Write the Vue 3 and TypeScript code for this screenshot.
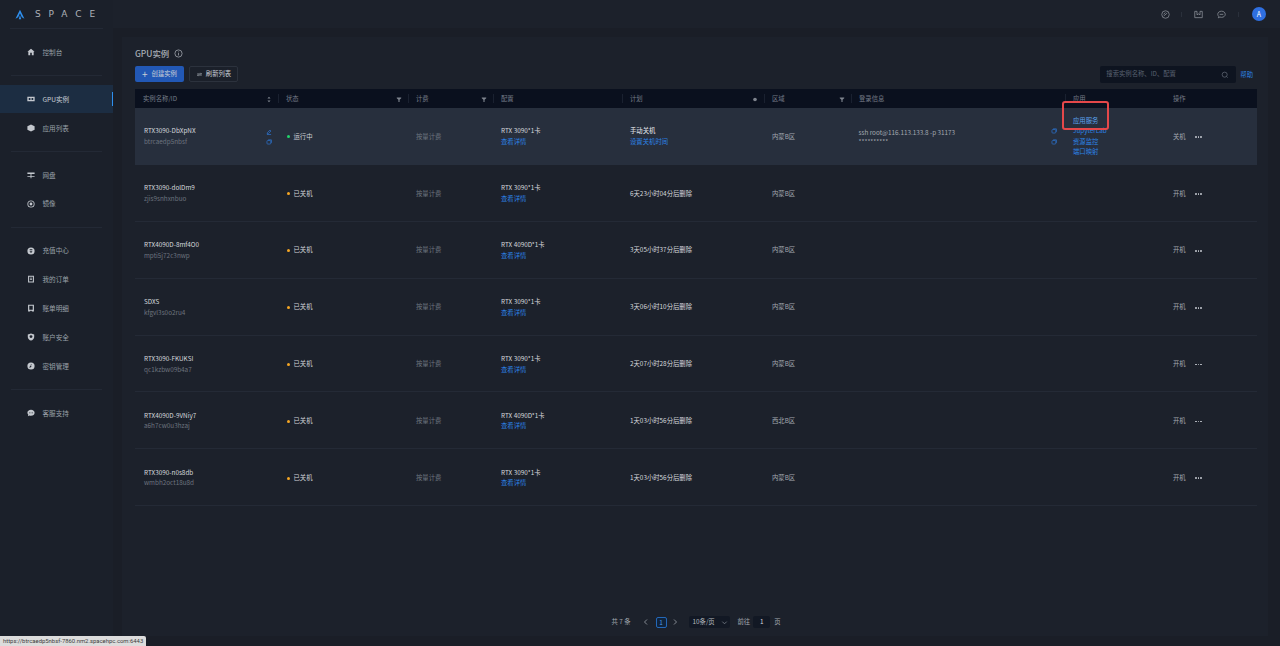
<template>
  <div class="app">
    <aside class="sidebar">
      <div class="logo">
        <svg class="logo-mark" viewBox="0 0 12 12"><path d="M6 0.3 L11.4 11 L8.2 9.4 L6 4.6 L3.8 9.4 L0.6 11 Z" fill="#2e8fee" /><path d="M6 6.6 L7.5 11.8 H4.5 Z" fill="#2e8fee" /></svg>
        <span class="logo-text">SPACE</span>
      </div>
      <div v-for="(group, i) in menu" :key="i" class="menu-group">
        <div v-for="item in group" :key="item.label" class="menu-item" :class="{ active: item.active }">
          <svg class="menu-icon" viewBox="0 0 12 12"><path :d="item.icon" /></svg>
          <span>{{ item.label }}</span>
        </div>
      </div>
    </aside>

    <div class="right">
      <header class="topbar">
        <svg class="top-icon" viewBox="0 0 12 12"><circle cx="6" cy="6" r="5" /><path d="M3.6 8 L8.4 4 M3.4 5.6 L6 3.4" /></svg>
        <i class="top-sep"></i>
        <svg class="top-icon tray" viewBox="0 0 12 12"><path d="M4 1.8 H1 V10.2 H11 V1.8 H8 M4 1.8 V6.4 L6 5.2 L8 6.4 V1.8" /></svg>
        <svg class="top-icon chat" viewBox="0 0 12 12"><path d="M6 1.6 C9 1.6 11 3.4 11 5.7 C11 8 9 9.8 6 9.8 C5.2 9.8 4.5 9.7 3.9 9.4 L1.8 10.4 L2.3 8.4 C1.5 7.7 1 6.8 1 5.7 C1 3.4 3 1.6 6 1.6 Z M3.6 5.8 H8.4" /></svg>
        <i class="top-sep"></i>
        <div class="avatar">A</div>
      </header>

      <main class="content">
        <div class="title-row">
          <h1>GPU实例</h1>
          <svg class="info" viewBox="0 0 12 12"><circle cx="6" cy="6" r="4.8" /><path d="M6 5.4 V8.6 M6 3.4 V4.4" /></svg>
        </div>

        <div class="toolbar">
          <button class="btn primary"><span class="plus">+</span>创建实例</button>
          <button class="btn ghost">
            <svg class="refresh" viewBox="0 0 12 12"><path d="M2 5 H9.5 L7.8 3.2 M10 7 H2.5 L4.2 8.8" /></svg>
            刷新列表
          </button>
          <div class="spacer"></div>
          <div class="search">
            <span>搜索实例名称、ID、配置</span>
            <svg viewBox="0 0 12 12"><circle cx="5.5" cy="5.5" r="3.8" /><path d="M8.3 8.3 L10 10" /></svg>
          </div>
          <a class="help">帮助</a>
        </div>

        <div class="table">
          <div class="thead row-grid">
            <div v-for="h in headers" :key="h.label" class="th">
              <span>{{ h.label }}</span>
              <svg v-if="h.icon === 'sort'" class="th-icon" viewBox="0 0 8 10"><path d="M4 1 L6.2 3.6 H1.8 Z M4 9 L1.8 6.4 H6.2 Z" /></svg>
              <svg v-if="h.icon === 'filter'" class="th-icon" viewBox="0 0 8 10"><path d="M0.8 2 H7.2 V3.2 L4.8 5.2 V8.4 H3.2 V5.2 L0.8 3.2 Z" /></svg>
              <svg v-if="h.icon === 'dot'" class="th-icon" viewBox="0 0 8 10"><circle cx="4" cy="5" r="2.6" /></svg>
            </div>
          </div>

          <div v-for="(r, idx) in rows" :key="r.id" class="tr row-grid" :class="{ selected: idx === 0 }">
            <div class="td name-cell">
              <div>
                <div class="strong">{{ r.name }}</div>
                <div class="muted">{{ r.id }}</div>
              </div>
              <div v-if="idx === 0" class="mini-icons">
                <svg viewBox="0 0 10 10"><path d="M2 8 L2.4 6 L6.6 1.8 L8.2 3.4 L4 7.6 Z M1.5 9.2 H8.5" /></svg>
                <svg viewBox="0 0 10 10"><rect x="1.6" y="2.6" width="6.4" height="5.8" rx="1.4" /><path d="M3.6 1.4 H9 V6.4" /></svg>
              </div>
            </div>
            <div class="td status">
              <i class="dot" :class="r.running ? 'green' : 'orange'"></i>{{ r.running ? '运行中' : '已关机' }}
            </div>
            <div class="td muted">按量计费</div>
            <div class="td">
              <div class="strong">{{ r.config }}</div>
              <a class="link">查看详情</a>
            </div>
            <div class="td">
              <template v-if="r.running">
                <div class="strong bold">手动关机</div>
                <a class="link">设置关机时间</a>
              </template>
              <div v-else class="strong">{{ r.plan }}</div>
            </div>
            <div class="td soft">{{ r.region }}</div>
            <div class="td login-cell">
              <template v-if="r.running">
                <div>
                  <div class="soft">ssh root@116.113.133.8 -p 31173</div>
                  <div class="soft stars">**********</div>
                </div>
                <div class="mini-icons copy">
                  <svg viewBox="0 0 10 10"><rect x="1.6" y="2.6" width="6.4" height="5.8" rx="1.4" /><path d="M3.6 1.4 H9 V6.4" /></svg>
                  <svg viewBox="0 0 10 10"><rect x="1.6" y="2.6" width="6.4" height="5.8" rx="1.4" /><path d="M3.6 1.4 H9 V6.4" /></svg>
                </div>
              </template>
            </div>
            <div class="td app-cell">
              <template v-if="r.running">
                <a class="link light">应用服务</a>
                <a class="link">JupyterLab</a>
                <a class="link">资源监控</a>
                <a class="link">端口映射</a>
              </template>
            </div>
            <div class="td ops">
              <span class="soft">{{ r.running ? '关机' : '开机' }}</span>
              <span class="more"><i></i><i></i><i></i></span>
            </div>
          </div>
          <div class="highlight"></div>
        </div>

        <footer class="pager">
          <span class="soft total">共 7 条</span>
          <svg class="chev prev" viewBox="0 0 8 8"><path d="M5 1.5 L2.5 4 L5 6.5" /></svg>
          <span class="page-num">1</span>
          <svg class="chev next" viewBox="0 0 8 8"><path d="M3 1.5 L5.5 4 L3 6.5" /></svg>
          <span class="size-select">10条/页<svg viewBox="0 0 8 8"><path d="M1.5 3 L4 5.5 L6.5 3" /></svg></span>
          <span class="soft goto">前往</span>
          <span class="page-input">1</span>
          <span class="soft page-unit">页</span>
        </footer>
      </main>
    </div>

    <div class="url-tip">https://btrcaedp5nbsf-7860.nm2.spacehpc.com:6443</div>
  </div>
</template>

<script setup lang="ts">
interface MenuItem {
  label: string
  icon: string
  active?: boolean
}

interface Row {
  name: string
  id: string
  config: string
  plan: string
  region: string
  running?: boolean
}

const menu: MenuItem[][] = [
  [{ label: '控制台', icon: 'M6 1 L11.4 5.8 H10 V11 H2 V5.8 H0.6 Z M4.8 7.2 V11 H7.2 V7.2 Z' }],
  [
    { label: 'GPU实例', active: true, icon: 'M0.5 2.6 H11.5 V9.4 H0.5 Z M2.6 4.6 V7.4 H5.2 V4.6 Z M6.8 4.6 V7.4 H9.4 V4.6 Z' },
    { label: '应用列表', icon: 'M6 0.6 L11.4 3.2 V8.8 L6 11.4 L0.6 8.8 V3.2 Z' },
  ],
  [
    { label: '网盘', icon: 'M0.6 2.2 H11.4 V4.6 H0.6 Z M5.3 4.6 H6.7 V7.8 H11.4 V9 H6.7 V10.8 H5.3 V9 H0.6 V7.8 H5.3 Z' },
    { label: '镜像', icon: 'M6 0.6 A5.4 5.4 0 1 0 6 11.4 A5.4 5.4 0 1 0 6 0.6 Z M6 1.9 A4.1 4.1 0 1 1 6 10.1 A4.1 4.1 0 1 1 6 1.9 Z M6 3.9 A2.1 2.1 0 1 0 6 8.1 A2.1 2.1 0 1 0 6 3.9 Z' },
  ],
  [
    { label: '充值中心', icon: 'M6 0.6 A5.4 5.4 0 1 0 6 11.4 A5.4 5.4 0 1 0 6 0.6 Z M4 3.4 H8 V4.6 H4 Z M4 5.6 H8 V6.8 H6.7 V9 H5.3 V6.8 H4 Z' },
    { label: '我的订单', icon: 'M1.6 1.2 H10.4 V11.2 H1.6 Z M3.2 2.8 V9.6 H8.8 V2.8 Z M4.4 4.2 H7.6 V5.3 H4.4 Z M4.4 6.4 H7.6 V7.5 H4.4 Z' },
    { label: '账单明细', icon: 'M1.6 1 H10.4 V11.2 H7.8 L6 9.8 L4.2 11.2 H1.6 Z M3.4 2.8 V8.6 H8.6 V2.8 Z' },
    { label: '账户安全', icon: 'M6 0.6 L10.8 2.4 V6 C10.8 8.8 8.4 10.8 6 11.4 C3.6 10.8 1.2 8.8 1.2 6 V2.4 Z M6 3.2 A2.2 2.2 0 1 0 6 7.6 A2.2 2.2 0 1 0 6 3.2 Z' },
    { label: '密钥管理', icon: 'M6 0.6 A5.4 5.4 0 1 0 6 11.4 A5.4 5.4 0 1 0 6 0.6 Z M7 3.2 A1.7 1.7 0 1 0 7 6.6 L4.4 8.8 L3.4 7.8 L5.4 5.2 A1.7 1.7 0 0 0 7 3.2 Z' },
  ],
  [{ label: '客服支持', icon: 'M6 1.2 C9.2 1.2 11.4 3.2 11.4 5.7 C11.4 8.2 9.2 10.2 6 10.2 C5.2 10.2 4.5 10.1 3.9 9.8 L1.4 10.8 L2 8.6 C1.1 7.8 0.6 6.8 0.6 5.7 C0.6 3.2 2.8 1.2 6 1.2 Z M3.2 5.1 V6.3 H4.4 V5.1 Z M5.4 5.1 V6.3 H6.6 V5.1 Z M7.6 5.1 V6.3 H8.8 V5.1 Z' }],
]

const headers = [
  { label: '实例名称/ID', icon: 'sort' },
  { label: '状态', icon: 'filter' },
  { label: '计费', icon: 'filter' },
  { label: '配置' },
  { label: '计划', icon: 'dot' },
  { label: '区域', icon: 'filter' },
  { label: '登录信息' },
  { label: '应用' },
  { label: '操作' },
]

const rows: Row[] = [
  { name: 'RTX3090-DbXpNX', id: 'btrcaedp5nbsf', config: 'RTX 3090*1卡', plan: '', region: '内蒙B区', running: true },
  { name: 'RTX3090-dolDm9', id: 'zjis9snhxnbuo', config: 'RTX 3090*1卡', plan: '6天23小时04分后删除', region: '内蒙B区' },
  { name: 'RTX4090D-8mf4O0', id: 'mpti5j72c3nwp', config: 'RTX 4090D*1卡', plan: '3天05小时37分后删除', region: '内蒙B区' },
  { name: 'SDXS', id: 'kfgvl3s0o2ru4', config: 'RTX 3090*1卡', plan: '3天06小时10分后删除', region: '内蒙B区' },
  { name: 'RTX3090-FKUKSI', id: 'qc1kzbw09b4a7', config: 'RTX 3090*1卡', plan: '2天07小时28分后删除', region: '内蒙B区' },
  { name: 'RTX4090D-9VNiy7', id: 'a6h7cw0u3hzaj', config: 'RTX 4090D*1卡', plan: '1天03小时56分后删除', region: '西北B区' },
  { name: 'RTX3090-n0s8db', id: 'wmbh2oct18u8d', config: 'RTX 3090*1卡', plan: '1天03小时56分后删除', region: '内蒙B区' },
]
</script>

<style>
html,
body {
  margin: 0;
  background: #1b202a;
}
</style>

<style scoped>
.app {
  position: relative;
  display: flex;
  width: 1280px;
  height: 646px;
  overflow: hidden;
  background: #1a1e27;
  color: #b4b8bf;
  font-family: "Noto Sans CJK SC", "Noto Sans", sans-serif;
  font-size: 6.35px;
  line-height: 10.5px;
}

.sidebar {
  width: 113px;
  flex: none;
  background: #1b202a;
  box-sizing: border-box;
}

.logo {
  display: flex;
  align-items: center;
  height: 29px;
  margin: 0 10px;
  padding-left: 5px;
  border-bottom: 1px solid #232935;
  box-sizing: border-box;
}

.logo-mark {
  width: 11px;
  height: 11px;
}

.logo-text {
  margin-left: 10px;
  padding-top: 1px;
  font-family: "DejaVu Sans", sans-serif;
  font-size: 9px;
  font-weight: 400;
  letter-spacing: 7.9px;
  color: #aeb2b9;
}

.menu-group {
  padding: 8.62px 0;
  margin: 0 11px;
  border-bottom: 1px solid #232935;
}

.menu-group:last-child {
  border-bottom: 0;
}

.menu-item {
  position: relative;
  display: flex;
  align-items: center;
  gap: 8px;
  height: 28.8px;
  margin: 0 -11px;
  padding-left: 26.5px;
  font-size: 6.6px;
  color: #9aa0a9;
}

.menu-item.active {
  background: #1c2d42;
  color: #c9ced6;
}

.menu-item.active::after {
  content: "";
  position: absolute;
  right: 0;
  top: 7.5px;
  width: 1.5px;
  height: 14px;
  background: #2e8fee;
}

.menu-icon {
  width: 8px;
  height: 8px;
  fill: #c4c8ce;
  fill-rule: evenodd;
}

.right {
  flex: 1;
  display: flex;
  flex-direction: column;
  min-width: 0;
}

.topbar {
  flex: none;
  display: flex;
  align-items: center;
  justify-content: flex-end;
  height: 28px;
  padding-right: 14px;
  background: #1c212b;
}

.top-icon {
  width: 9px;
  height: 9px;
  fill: none;
  stroke: #8f949c;
  stroke-width: 1;
}

.top-sep {
  width: 1px;
  height: 5px;
  margin-left: 11.5px;
  background: #2a303b;
}

.tray {
  margin-left: 12px;
}

.chat {
  margin-left: 14px;
}

.avatar {
  width: 14px;
  height: 14px;
  margin-left: 13.5px;
  border-radius: 50%;
  background: #2f6fe0;
  color: #fff;
  text-align: center;
  font-size: 7px;
  line-height: 14px;
}

.content {
  flex: 1;
  display: flex;
  flex-direction: column;
  margin: 9px 12px 10px 9px;
  padding: 10px 11px 8px 13px;
  background: #1c212b;
  min-height: 0;
}

.title-row {
  display: flex;
  align-items: center;
  gap: 5px;
  height: 13px;
}

h1 {
  margin: 0;
  font-size: 8.4px;
  font-weight: 500;
  color: #a9aeb6;
}

.info {
  width: 9px;
  height: 9px;
  fill: none;
  stroke: #a9aeb6;
  stroke-width: 1;
}

.toolbar {
  display: flex;
  align-items: flex-start;
  margin-top: 6px;
  height: 17px;
}

.btn {
  display: flex;
  align-items: center;
  justify-content: center;
  gap: 3px;
  width: 49px;
  height: 16px;
  padding: 0;
  border-radius: 2px;
  font: inherit;
  color: #c9ced6;
  box-sizing: border-box;
}

.primary {
  gap: 4px;
  background: #2258b5;
  border: 0;
}

.plus {
  font-size: 10px;
  line-height: 10px;
}

.ghost {
  margin-left: 5px;
  background: #1b202a;
  border: 1px solid #2c323d;
}

.refresh {
  width: 7px;
  height: 7px;
  fill: none;
  stroke: #c0c4cb;
  stroke-width: 1;
}

.spacer {
  flex: 1;
}

.search {
  display: flex;
  align-items: center;
  justify-content: space-between;
  width: 136px;
  height: 17px;
  padding: 0 7px 0 6px;
  box-sizing: border-box;
  border-radius: 2px;
  background: #0e1420;
  color: #596170;
}

.search svg {
  width: 8px;
  height: 8px;
  fill: none;
  stroke: #6b7280;
  stroke-width: 1;
}

.help {
  margin: 4px 4px 0 4px;
  color: #2c83e6;
}

.table {
  position: relative;
  margin-top: 6px;
}

.row-grid {
  display: grid;
  grid-template-columns: 143px 130px 85px 129px 142px 87px 214px 100px 92px;
}

.thead {
  height: 19px;
  background: #0a101e;
}

.th {
  position: relative;
  display: flex;
  align-items: center;
  justify-content: space-between;
  padding: 1.5px 6px 0 8px;
  color: #757c88;
}

.th + .th::before {
  content: "";
  position: absolute;
  left: 0;
  top: 5px;
  height: 9px;
  width: 1px;
  background: #1a2130;
}

.th:last-child::before {
  display: none;
}

.th-icon {
  width: 6px;
  height: 7px;
  fill: #7e848e;
}

.tr {
  height: 56.9px;
  border-bottom: 1px solid #242a36;
  box-sizing: border-box;
}

.tr.selected {
  background: #272f3d;
  border-bottom-color: #272f3d;
}

.td {
  display: flex;
  flex-direction: column;
  justify-content: center;
  min-width: 0;
  padding-top: 2px;
  padding-left: 8px;
}

.name-cell {
  flex-direction: row;
  align-items: center;
  justify-content: space-between;
  padding-left: 9px;
  padding-right: 6px;
}

.strong {
  color: #d6d9de;
}

.bold {
  font-weight: 500;
}

.muted {
  color: #6d747f;
}

.soft {
  color: #a3a8b0;
}

.link {
  display: block;
  color: #2c83e6;
}

.link.light {
  color: #5ba3ee;
}

.mini-icons {
  display: flex;
  flex-direction: column;
  gap: 4px;
}

.mini-icons svg {
  width: 6px;
  height: 6px;
  fill: none;
  stroke: #2c73cf;
  stroke-width: 1.2;
}

.status {
  flex-direction: row;
  align-items: center;
  justify-content: flex-start;
  padding-left: 9px;
  color: #d0d3d8;
}

.dot {
  width: 3px;
  height: 3px;
  margin-right: 3.5px;
  border-radius: 50%;
}

.green {
  background: #22d66b;
}

.orange {
  background: #f5a623;
}

.login-cell {
  flex-direction: row;
  align-items: center;
  justify-content: space-between;
  padding-left: 7.5px;
  padding-right: 8px;
}

.stars {
  line-height: 8px;
}

.copy {
  gap: 5px;
}

.ops {
  flex-direction: row;
  align-items: center;
  justify-content: flex-start;
  gap: 9px;
}

.more {
  display: flex;
  gap: 1px;
}

.more i {
  width: 1.8px;
  height: 1.8px;
  border-radius: 50%;
  background: #c0c4cb;
}

.highlight {
  position: absolute;
  left: 927px;
  top: 12px;
  width: 47px;
  height: 28.5px;
  box-sizing: border-box;
  border: 2px solid #e5484a;
  border-radius: 3px;
}

.pager {
  margin-top: auto;
  display: flex;
  align-items: center;
  justify-content: center;
  height: 12px;
}

.chev {
  width: 8px;
  height: 8px;
  fill: none;
  stroke: #8f949c;
  stroke-width: 0.9;
}

.prev {
  margin: 0 6px 0 11px;
}

.next {
  margin-left: 4px;
}

.page-num {
  width: 11px;
  height: 11px;
  box-sizing: border-box;
  border: 1px solid #2468b8;
  border-radius: 2px;
  background: #10233b;
  color: #4d9ae8;
  text-align: center;
  line-height: 9px;
}

.size-select {
  display: flex;
  align-items: center;
  justify-content: space-between;
  width: 41px;
  height: 12px;
  margin-left: 10px;
  padding: 0 2px 0 4px;
  box-sizing: border-box;
  border-radius: 2px;
  background: #121824;
  color: #b4b8bf;
}

.size-select svg {
  width: 7px;
  height: 7px;
  fill: none;
  stroke: #7e848e;
  stroke-width: 0.9;
}

.goto {
  margin-left: 8px;
}

.page-input {
  width: 17px;
  height: 12px;
  margin-left: 3px;
  border-radius: 2px;
  background: #121824;
  color: #d6d9de;
  text-align: center;
  line-height: 12px;
}

.page-unit {
  margin-left: 4px;
}

.url-tip {
  position: absolute;
  left: 0;
  bottom: 0;
  height: 10px;
  padding: 0 3px;
  background: #dcdcdc;
  color: #3c3c3c;
  font-family: "Roboto", sans-serif;
  font-size: 5.9px;
  line-height: 10px;
  border-top-right-radius: 2px;
}
</style>
